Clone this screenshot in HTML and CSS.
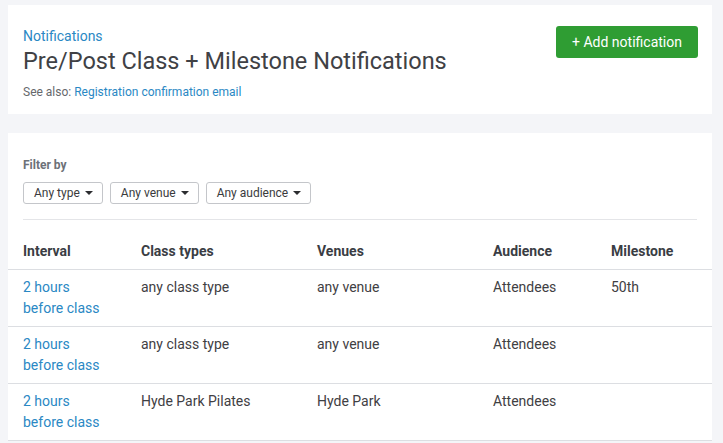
FILE: index.html
```html
<!DOCTYPE html>
<html lang="en">
<head>
<meta charset="utf-8">
<title>Pre/Post Class + Milestone Notifications</title>
<link rel="stylesheet" href="styles.css">
</head>
<body>
<div class="page">
  <section class="card header-card">
    <div class="header-text">
      <a class="crumb" href="#">Notifications</a>
      <h1 class="title">Pre/Post Class + Milestone Notifications</h1>
      <p class="see-also">See also: <a href="#">Registration confirmation email</a></p>
    </div>
    <button class="btn-add" type="button">+ Add notification</button>
  </section>

  <section class="card list-card">
    <div class="filters">
      <div class="filter-label">Filter by</div>
      <div class="filter-row">
        <button class="dropdown" type="button">Any type <span class="caret"></span></button>
        <button class="dropdown" type="button">Any venue <span class="caret"></span></button>
        <button class="dropdown" type="button">Any audience <span class="caret"></span></button>
      </div>
      <div class="divider"></div>
    </div>
    <table class="table">
      <colgroup>
        <col class="c-interval"><col class="c-types"><col class="c-venues"><col class="c-aud"><col class="c-mile">
      </colgroup>
      <thead>
        <tr><th>Interval</th><th>Class types</th><th>Venues</th><th>Audience</th><th>Milestone</th></tr>
      </thead>
      <tbody>
        <tr><td><a href="#">2 hours<br>before class</a></td><td>any class type</td><td>any venue</td><td>Attendees</td><td>50th</td></tr>
        <tr><td><a href="#">2 hours<br>before class</a></td><td>any class type</td><td>any venue</td><td>Attendees</td><td></td></tr>
        <tr><td><a href="#">2 hours<br>before class</a></td><td>Hyde Park Pilates</td><td>Hyde Park</td><td>Attendees</td><td></td></tr>
      </tbody>
    </table>
  </section>
</div>
</body>
</html>
```
FILE: styles.css
```css
* { box-sizing: border-box; }
html, body {
  margin: 0;
  padding: 0;
  background: #f4f5f8;
  font-family: Roboto, "Liberation Sans", Arial, sans-serif;
  color: #3a3b3d;
}
a { color: #2a88c4; text-decoration: none; }
.page {
  width: 704px;
  margin: 5px 0 0 8px;
  display: flex;
  flex-direction: column;
  gap: 19px;
}
.card { background: #fff; }
.header-card {
  height: 109px;
  padding: 21px 14px 0 15px;
  display: flex;
  justify-content: space-between;
  align-items: flex-start;
}
.crumb { display: block; font-size: 14px; line-height: 20px; }
.title {
  margin: 0;
  font-size: 23.5px;
  font-weight: 400;
  line-height: 30px;
  color: #404145;
}
.see-also {
  margin: 8px 0 0;
  font-size: 12px;
  line-height: 16px;
  color: #66686c;
}
.btn-add {
  margin-top: 0;
  width: 142px;
  height: 32px;
  border: none;
  border-radius: 3px;
  background: #2f9d33;
  color: #fff;
  font-family: inherit;
  font-size: 14px;
  padding: 0;
}
.filters { padding: 24px 15px 0; }
.filter-label {
  font-size: 12px;
  font-weight: 700;
  line-height: 16px;
  color: #6d7178;
}
.filter-row { display: flex; gap: 7px; margin-top: 9px; }
.dropdown {
  height: 22px;
  padding: 0 9px 0 10px;
  border: 1px solid #c4c6ca;
  border-radius: 3px;
  background: #fff;
  font-family: inherit;
  font-size: 12px;
  color: #3a3b3d;
  display: inline-flex;
  align-items: center;
  gap: 5px;
}
.caret {
  width: 0; height: 0;
  border-left: 4px solid transparent;
  border-right: 4px solid transparent;
  border-top: 4px solid #2c2d30;
}
.divider { height: 1px; background: #e4e5e8; margin-top: 15px; }
.table {
  width: 100%;
  margin-top: 14px;
  border-collapse: collapse;
  table-layout: fixed;
  font-size: 14px;
}
.c-interval { width: 118px; }
.c-types { width: 176px; }
.c-venues { width: 176px; }
.c-aud { width: 118px; }
.c-mile { width: 116px; }
.table th, .table td {
  text-align: left;
  vertical-align: top;
  padding: 7px 15px;
  line-height: 21px;
  border-bottom: 1px solid #dcdee2;
}
.table th { font-weight: 700; color: #3a3d44; }
.table td { color: #3f4043; }
```
